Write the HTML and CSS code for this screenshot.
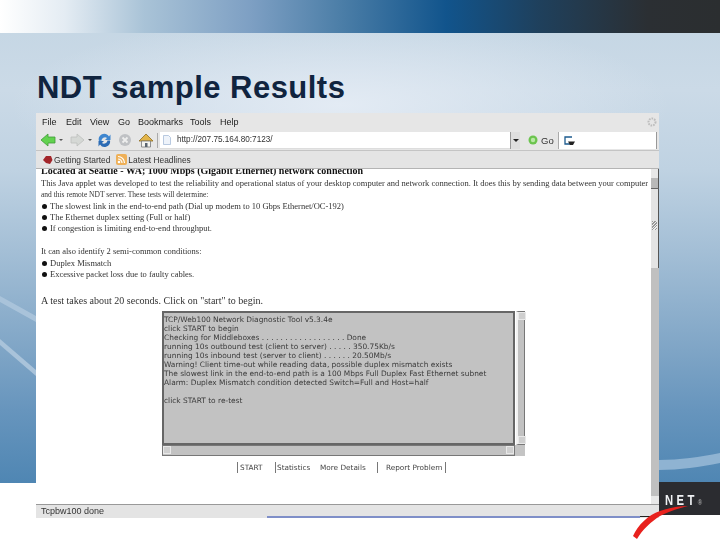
FILE: index.html
```html
<!DOCTYPE html>
<html lang="en">
<head>
<meta charset="utf-8">
<title>NDT sample Results</title>
<link rel="stylesheet" href="styles.css">
</head>
<body>
<div class="slide">
  <div class="backdrop">
    <svg class="swoosh" width="720" height="483" viewBox="0 0 720 483">
      <path d="M0 296 L36 316 L36 322 L0 302 Z" fill="#a9c3da"/>
      <path d="M0 339 L36 370 L36 376 L0 345 Z" fill="#a9c3da"/>
      <path d="M659 460 C680 460 700 457 720 453 L720 463 C700 467 680 470 659 470 Z" fill="#8fb3d2"/>
    </svg>
  </div>
  <header class="topbar"></header>
  <h1 class="title">NDT sample Results</h1>
  <main class="browser">
    <nav class="menubar">
      <span class="m-file">File</span><span class="m-edit">Edit</span><span class="m-view">View</span><span class="m-go">Go</span><span class="m-book">Bookmarks</span><span class="m-tools">Tools</span><span class="m-help">Help</span>
      <svg class="throbber" width="10" height="10" viewBox="0 0 10 10"><circle cx="5" cy="5" r="3.5" fill="none" stroke="#bdbdbd" stroke-width="2" stroke-dasharray="1.6 1"/></svg>
    </nav>
    <div class="toolbar">
      <svg class="ico-back" width="16" height="14" viewBox="0 0 16 14"><path d="M1 7 L8 1 V4 H15 V10 H8 V13 Z" fill="#62d24f" stroke="#3f9a37" stroke-width=".8"/></svg>
      <span class="drop"></span>
      <svg class="ico-fwd" width="15" height="14" viewBox="0 0 15 14"><path d="M14 7 L7 1 V4 H1 V10 H7 V13 Z" fill="#d5d8d5" stroke="#bcbfbc" stroke-width=".8"/></svg>
      <span class="drop"></span>
      <svg class="ico-reload" width="15" height="15" viewBox="0 0 15 15"><path d="M2 8 A5.5 5.5 0 0 1 12 3.5 L13.5 1.5 V7 H8 L10 5 A3.5 3.5 0 0 0 4.500 8 Z" fill="#3f86cf"/><path d="M13 7.500 A5.500 5.500 0 0 1 3 11.500 L1.500 13.500 V8 H7 L5 10 A3.500 3.500 0 0 0 10.500 7.500 Z" fill="#2c6bb4"/></svg>
      <svg class="ico-stop" width="14" height="14" viewBox="0 0 14 14"><circle cx="7" cy="7" r="6" fill="#bfc1c4"/><path d="M4.500 4.500 L9.500 9.500 M9.500 4.500 L4.500 9.500" stroke="#eee" stroke-width="1.800"/></svg>
      <svg class="ico-home" width="16" height="15" viewBox="0 0 16 15"><path d="M1 8 L8 1 L15 8 Z" fill="#e3b54a" stroke="#8d6d22" stroke-width=".8"/><path d="M3.500 8 H12.500 V14 H3.500 Z" fill="#f4f4f0" stroke="#77787a" stroke-width=".8"/><path d="M7 10 H9.500 V14 H7 Z" fill="#5a6470"/></svg>
      <span class="tool-sep"></span>
      <div class="urlbar">
        <svg class="ico-page" width="8" height="10" viewBox="0 0 8 10"><path d="M.5 .5 H5.500 L7.500 2.500 V9.500 H.5 Z" fill="#eef3fa" stroke="#a8bdd8" stroke-width=".8"/></svg>
        <span class="url">http://207.75.164.80:7123/</span>
      </div>
      <span class="url-drop"><i></i></span>
      <svg class="ico-go" width="10" height="10" viewBox="0 0 10 10"><circle cx="5" cy="5" r="4.500" fill="#6bc44e"/><circle cx="5" cy="5" r="2.200" fill="#b9e8a5"/></svg>
      <span class="go">Go</span>
      <div class="searchbar">
        <svg width="13" height="11" viewBox="0 0 13 11"><path d="M9 2 H2 V9 H9" fill="none" stroke="#1d5b8e" stroke-width="1.300"/><path d="M5 6.500 H12 L10 10 H7 Z" fill="#222"/></svg>
      </div>
    </div>
    <div class="bookmarks">
      <svg class="ico-red" width="11" height="10" viewBox="0 0 11 10"><path d="M1 5 L4 1 L9 1 L10.500 5 L8 9 L4 8 Z" fill="#a3262a"/></svg>
      <span class="bm-a">Getting Started</span>
      <svg class="ico-rss" width="11" height="11" viewBox="0 0 11 11"><rect width="11" height="11" rx="2" fill="#eeb058"/><circle cx="3" cy="8" r="1.300" fill="#fff"/><path d="M2 5 A4 4 0 0 1 6 9 M2 2.500 A6.500 6.500 0 0 1 8.500 9" fill="none" stroke="#fff" stroke-width="1.200"/></svg>
      <span class="bm-b">Latest Headlines</span>
    </div>
    <div class="viewport">
      <div class="page">
        <h2 class="loc">Located at Seattle - WA; 1000 Mbps (Gigabit Ethernet) network connection</h2>
        <p class="line">This Java applet was developed to test the reliability and operational status of your desktop computer and network connection. It does this by sending data between your computer</p>
        <p class="line line-tight">and this remote NDT server. These tests will determine:</p>
        <ul class="list">
          <li>The slowest link in the end-to-end path (Dial up modem to 10 Gbps Ethernet/OC-192)</li>
          <li>The Ethernet duplex setting (Full or half)</li>
          <li>If congestion is limiting end-to-end throughput.</li>
        </ul>
        <p class="line gap">It can also identify 2 semi-common conditions:</p>
        <ul class="list">
          <li>Duplex Mismatch</li>
          <li>Excessive packet loss due to faulty cables.</li>
        </ul>
        <p class="line line-big gap2">A test takes about 20 seconds. Click on "start" to begin.</p>
        <div class="applet">
          <div class="console">
            <div class="console-text">
              <div>TCP/Web100 Network Diagnostic Tool v5.3.4e</div>
              <div>click START to begin</div>
              <div>Checking for Middleboxes . . . . . . . . . . . . . . . . . . Done</div>
              <div>running 10s outbound test (client to server) . . . . . 350.75Kb/s</div>
              <div>running 10s inbound test (server to client) . . . . . . 20.50Mb/s</div>
              <div>Warning! Client time-out while reading data, possible duplex mismatch exists</div>
              <div>The slowest link in the end-to-end path is a 100 Mbps Full Duplex Fast Ethernet subnet</div>
              <div>Alarm: Duplex Mismatch condition detected Switch=Full and Host=half</div>
              <div>&nbsp;</div>
              <div>click START to re-test</div>
            </div>
          </div>
          <div class="vscroll"><span class="sb-btn"></span><span class="sb-btn"></span></div>
          <div class="hscroll"><span class="sb-btn"></span><span class="sb-btn"></span></div>
          <div class="corner"></div>
        </div>
        <div class="applet-btns">
          <span class="b-start">START</span><span class="b-stat">Statistics</span><span class="b-more">More Details</span><span class="b-report">Report Problem</span>
        </div>
      </div>
      <aside class="scrollbar">
        <span class="sc-up"></span>
        <span class="sc-thumb"></span>
        <span class="sc-track"><i></i></span>
        <span class="sc-low"></span>
        <span class="sc-end"></span>
      </aside>
    </div>
    <footer class="status">Tcpbw100 done</footer>
  </main>
  <div class="logo">
    <span class="logo-text">NET<small>®</small></span>
  </div>
  <div class="taskline"></div>
  <svg class="logo-red" width="60" height="38" viewBox="0 0 60 38"><path d="M1 33 C6 22 16 12 28 8 C38 5 46 3 56 3 C44 6 36 9 28 13 C20 18 10 27 5 36 Z" fill="#e8211d"/></svg>
</div>
</body>
</html>
```
FILE: styles.css
```css
* { box-sizing: border-box; }
html, body { margin: 0; padding: 0; background: #fff; }
.slide { position: relative; width: 720px; height: 540px; overflow: hidden; background: #fff; font-family: "Liberation Sans", Arial, sans-serif; }
.backdrop { position: absolute; left: 0; top: 0; width: 720px; height: 483px; background: radial-gradient(ellipse 330px 90px at 340px 105px, #e3ebf4 0%, rgba(227,235,244,0) 100%), linear-gradient(180deg, #c3d5e3 0%, #cbdae7 90px, #bfd2e2 170px, #a4bfd6 250px, #7fa5c6 350px, #6795bd 410px, #4f86b3 483px); }
.swoosh { display: block; }
.topbar { position: relative; height: 33px; background: linear-gradient(90deg, #fff 0%, #e4ecf3 9%, #a9c3d7 20%, #7d9fc3 35%, #4d7fa8 47%, #11548c 62%, #1f405c 75%, #2b2f33 90%, #2b2e30 100%); }
.title { position: relative; margin: 0; height: 80px; padding: 37px 0 0 37px; font-size: 31px; line-height: 36px; font-weight: 700; color: #10243f; letter-spacing: .48px; }
.browser { position: relative; margin-left: 36px; width: 623px; height: 405px; display: flex; flex-direction: column; background: #fff; color: #222; filter: blur(.45px); }
.menubar { flex: none; height: 17px; background: #e6e6e6; display: flex; align-items: center; font-size: 9px; color: #222; padding-left: 6px; position: relative; }
.menubar span { display: block; }
.m-file { width: 24px; }
.m-edit { width: 24px; }
.m-view { width: 28px; }
.m-go { width: 20px; }
.m-book { width: 52px; }
.m-tools { width: 30px; }
.m-help { width: 30px; }
.throbber { margin-left: auto; margin-right: 2px; }
.toolbar { flex: none; height: 21px; background: #e6e6e6; border-bottom: 1px solid #c4c4c4; display: flex; align-items: center; padding-left: 4px; }
.ico-back { flex: none; }
.drop { flex: none; width: 0; height: 0; margin: 0 6px 0 3px; border-left: 2px solid transparent; border-right: 2px solid transparent; border-top: 2px solid #555; }
.ico-fwd { flex: none; margin-left: 1px; }
.ico-reload { flex: none; margin-left: -1px; }
.ico-stop { flex: none; margin-left: 6px; }
.ico-home { flex: none; margin-left: 6px; }
.tool-sep { flex: none; width: 1px; height: 15px; background: #aaa; margin-left: 3px; }
.urlbar { flex: none; width: 350px; height: 17px; margin-left: 2px; background: #fff; border-bottom: 1px solid #ddd; display: flex; align-items: center; padding-left: 3px; }
.ico-page { flex: none; }
.url { margin-left: 6px; font-size: 8.200px; color: #333; }
.url-drop { flex: none; width: 10px; height: 17px; background: #dedede; border-left: 1px solid #999; display: flex; align-items: center; justify-content: center; }
.url-drop i { width: 0; height: 0; border-left: 3px solid transparent; border-right: 3px solid transparent; border-top: 3px solid #222; }
.ico-go { flex: none; margin-left: 8px; }
.go { font-size: 9.500px; margin-left: 3px; color: #333; }
.searchbar { flex: none; width: 99px; height: 17px; margin-left: 4px; background: #fff; border-left: 1px solid #aaa; border-right: 1px solid #999; display: flex; align-items: center; padding-left: 4px; }
.bookmarks { flex: none; height: 18px; background: #e4e4e4; border-bottom: 1px solid #b4b4b4; display: flex; align-items: center; padding-left: 6px; font-size: 8.400px; color: #333; }
.ico-red { flex: none; }
.bm-a { margin-left: 1px; }
.ico-rss { flex: none; margin-left: 6px; }
.bm-b { margin-left: 1px; }
.viewport { flex: 1; min-height: 0; display: flex; overflow: hidden; background: #fff; }
.page { flex: 1; min-width: 0; padding-left: 5px; font-family: "Liberation Serif", "Times New Roman", serif; color: #333; margin-top: -3px; }
.loc { margin: 0; height: 10px; font-size: 10px; line-height: 10px; font-weight: 700; white-space: nowrap; color: #111; }
.line { margin: 0; height: 11.300px; font-size: 8.500px; line-height: 11.300px; white-space: nowrap; }
.line-tight { font-size: 7.500px; }
.line-big { font-size: 10px; }
.loc + .line { margin-top: 2px; }
.list { margin: 0; padding: 0 0 0 9px; list-style: none; font-size: 8.500px; line-height: 11.300px; }
.list li { position: relative; white-space: nowrap; padding-left: 0; }
.list li::before { content: ""; position: absolute; left: -8px; top: 3px; width: 5px; height: 5px; border-radius: 50%; background: #111; }
.gap { margin-top: 12px; }
.gap2 { margin-top: 15px; }
.applet { display: grid; grid-template-columns: 353px 10px; grid-template-rows: 134px 11px; margin: 4px 0 0 121px; width: 363px; font-family: "DejaVu Sans", sans-serif; }
.console { background: #c2c2c2; border: 2px solid #666; padding: 2px 0 0 0; overflow: hidden; }
.console-text { font-size: 7.430px; line-height: 9px; white-space: nowrap; color: #3a3a3a; }
.vscroll { background: #c2c2c2; border: 1px solid #777; border-left: 2px solid #f2f2f2; display: flex; flex-direction: column; justify-content: space-between; margin-left: 1px; }
.hscroll { background: #c2c2c2; border: 1px solid #777; display: flex; justify-content: space-between; }
.sb-btn { display: block; width: 8px; height: 8px; background: #cfcfcf; border: 1px solid #e8e8e8; }
.corner { background: #c4c4c4; }
.applet-btns { display: flex; margin: 6px 0 0 196px; height: 11px; font-family: "DejaVu Sans", sans-serif; font-size: 7.300px; line-height: 11px; color: #444; white-space: nowrap; }
.b-start { width: 38px; padding-left: 2px; border-left: 1px solid #777; }
.b-stat { width: 45px; padding-left: 1px; border-left: 1px solid #777; }
.b-more { width: 57px; }
.b-report { width: 69px; padding-left: 8px; border-left: 1px solid #777; border-right: 1px solid #777; }
.scrollbar { flex: none; width: 8px; display: flex; flex-direction: column; background: #e4e4e4; }
.sc-up { flex: none; height: 9px; background: #e8e8e8; border-right: 1px solid #555; position: relative; }
.sc-thumb { flex: none; height: 11px; background: #b9b9b9; border-right: 1px solid #555; border-bottom: 1px solid #666; }
.sc-track { flex: none; height: 79px; background: #e4e4e4; border-right: 1px solid #555; position: relative; }
.sc-track i { position: absolute; left: 1px; top: 32px; width: 5px; height: 9px; background: repeating-linear-gradient(135deg, #999 0, #999 1px, #eee 1px, #eee 2px); }
.sc-low { flex: 1; background: #c0c0c0; }
.sc-end { flex: none; height: 8px; background: #e8e8e8; }
.status { flex: none; height: 14px; background: #e4e4e4; border-top: 1px solid #999; font-size: 9px; line-height: 12px; padding-left: 5px; color: #333; }
.logo { position: absolute; left: 659px; top: 482px; width: 61px; height: 33px; background: #2b2c30; display: flex; align-items: flex-start; padding: 10px 0 0 6px; }
.logo-text { display: block; font-size: 15px; line-height: 15px; font-weight: 700; color: #f0f2f4; letter-spacing: 4.500px; white-space: nowrap; transform: scaleX(.75); transform-origin: left top; }
.logo-text small { font-size: 8px; font-weight: 400; letter-spacing: 0; color: #bbb; }
.taskline { position: absolute; left: 267px; top: 516px; width: 373px; height: 2px; background: #7f8fc8; }
.taskline::after { content: ""; position: absolute; left: 100%; top: 0; width: 11px; height: 1px; background: #222; }
.logo-red { position: absolute; left: 632px; top: 503px; }
```
